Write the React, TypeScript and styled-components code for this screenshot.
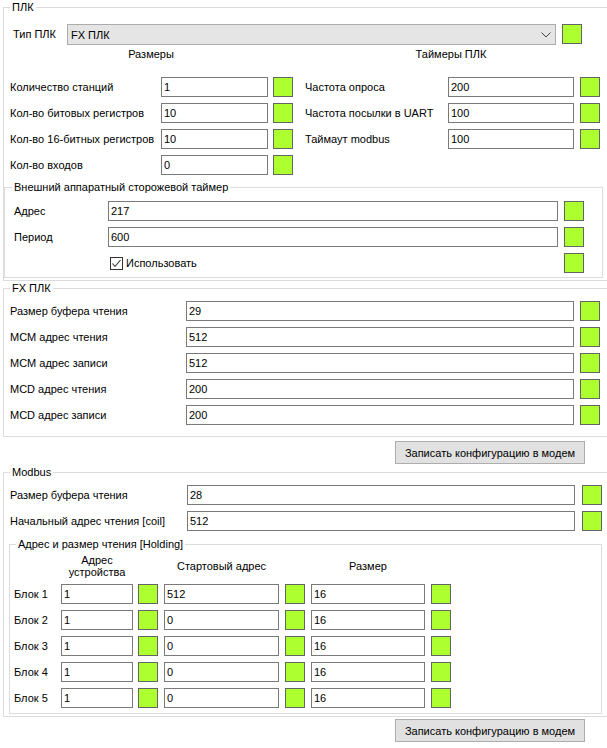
import React from "react";
import styled, { createGlobalStyle } from "styled-components";

const Global = createGlobalStyle`
  html, body { margin: 0; padding: 0; background: #fff; }
  body { font-family: "Liberation Sans", Arial, sans-serif; font-size: 11px; color: #000; }
  * { box-sizing: border-box; }
`;

const Page = styled.div`
  width: 607px;
  height: 748px;
  overflow: hidden;
  padding: 1px 0 0 3px;
  background: #fff;
`;

const Group = styled.fieldset<{ $width: number; $ml?: number; $mt?: number }>`
  margin: ${(p) => p.$mt ?? 0}px 0 0 ${(p) => p.$ml ?? 0}px;
  padding: 0;
  border: 1px solid #dcdcdc;
  width: ${(p) => p.$width}px;
  min-width: 0;
`;

const Legend = styled.legend<{ $ml?: number }>`
  margin-left: ${(p) => p.$ml ?? 6}px;
  padding: 0 2px;
  font-size: 11px;
  line-height: 13px;
  height: 13px;
  white-space: nowrap;
`;

const Body = styled.div<{ $pt: number; $pb: number; $pl: number }>`
  padding: ${(p) => p.$pt}px 0 ${(p) => p.$pb}px ${(p) => p.$pl}px;
`;

const Stack = styled.div<{ $mt?: number }>`
  display: flex;
  flex-direction: column;
  gap: 6px;
  margin-top: ${(p) => p.$mt ?? 0}px;
`;

const TypeRow = styled.div`
  display: flex;
  align-items: flex-start;
  padding-left: 9px;
  height: 21px;
`;

const TypeLabel = styled.span`
  width: 54px;
  line-height: 21px;
  white-space: nowrap;
`;

const Combo = styled.div`
  width: 489px;
  height: 21px;
  background: #e5e5e5;
  border: 1px solid #acacac;
  display: flex;
  align-items: center;
  justify-content: space-between;
  padding: 0 4px 0 3px;
`;

const Green = styled.span<{ $ml: number }>`
  display: block;
  flex: none;
  width: 20px;
  height: 20px;
  margin-left: ${(p) => p.$ml}px;
  background: #adff2f;
  border: 1px solid #646464;
`;

const HeadingsRow = styled.div`
  display: flex;
  margin-top: 3px;
  padding-left: 97px;
  line-height: 13px;
`;

const Heading = styled.span<{ $w: number; $ml?: number }>`
  display: block;
  width: ${(p) => p.$w}px;
  margin-left: ${(p) => p.$ml ?? 0}px;
  text-align: center;
  white-space: nowrap;
`;

const Columns = styled.div`
  display: flex;
  align-items: flex-start;
  margin-top: 16px;
`;

const Col = styled.div<{ $ml?: number }>`
  display: flex;
  flex-direction: column;
  gap: 6px;
  margin-left: ${(p) => p.$ml ?? 0}px;
`;

const FieldRow = styled.div`
  display: flex;
  align-items: center;
  height: 20px;
`;

const FieldLabel = styled.span<{ $w: number; $pl?: number }>`
  flex: none;
  width: ${(p) => p.$w}px;
  padding-left: ${(p) => p.$pl ?? 0}px;
  white-space: nowrap;
  line-height: 13px;
`;

const Input = styled.input<{ $w: number; $ml?: number }>`
  flex: none;
  width: ${(p) => p.$w}px;
  height: 20px;
  margin: 0 0 0 ${(p) => p.$ml ?? 0}px;
  padding: 0 2px;
  border: 1px solid #7a7a7a;
  background: #fff;
  color: #000;
  font-family: "Liberation Sans", Arial, sans-serif;
  font-size: 11px;
  outline: none;
`;

const CheckArea = styled.label`
  flex: none;
  width: 450px;
  display: flex;
  align-items: center;
  gap: 3px;
  padding-left: 2px;
`;

const CheckBox = styled.span`
  display: flex;
  align-items: center;
  justify-content: center;
  width: 13px;
  height: 13px;
  border: 1px solid #333;
  background: #fff;
`;

const ButtonRow = styled.div<{ $mt: number }>`
  display: flex;
  justify-content: flex-end;
  margin: ${(p) => p.$mt}px 22px 0 0;
`;

const Button = styled.button`
  width: 190px;
  height: 23px;
  padding: 0;
  background: #e1e1e1;
  border: 1px solid #adadad;
  font-family: "Liberation Sans", Arial, sans-serif;
  font-size: 11px;
  color: #000;
`;

const HoldHead = styled.div`
  display: flex;
  align-items: center;
  height: 24px;
  padding-left: 47px;
  margin-top: 3px;
`;

const HoldHeading = styled.span<{ $w: number; $ml?: number }>`
  display: block;
  width: ${(p) => p.$w}px;
  margin-left: ${(p) => p.$ml ?? 0}px;
  text-align: center;
  line-height: 12px;
`;

const Chevron = () => (
  <svg width="10" height="6" viewBox="0 0 10 6">
    <path d="M0.5 0.5 L5 5 L9.5 0.5" fill="none" stroke="#444" strokeWidth="1" />
  </svg>
);

const leftRows: [string, string][] = [
  ["Количество станций", "1"],
  ["Кол-во битовых регистров", "10"],
  ["Кол-во 16-битных регистров", "10"],
  ["Кол-во входов", "0"],
];

const rightRows: [string, string][] = [
  ["Частота опроса", "200"],
  ["Частота посылки в UART", "100"],
  ["Таймаут modbus", "100"],
];

const fxRows: [string, string][] = [
  ["Размер буфера чтения", "29"],
  ["MCM адрес чтения", "512"],
  ["MCM адрес записи", "512"],
  ["MCD адрес чтения", "200"],
  ["MCD адрес записи", "200"],
];

const blocks: [string, string, string][] = [
  ["1", "512", "16"],
  ["1", "0", "16"],
  ["1", "0", "16"],
  ["1", "0", "16"],
  ["1", "0", "16"],
];

export default function App() {
  return (
    <Page>
      <Global />
      <Group $width={610}>
        <Legend>ПЛК</Legend>
        <Body $pt={10} $pb={2} $pl={0}>
          <TypeRow>
            <TypeLabel>Тип ПЛК</TypeLabel>
            <Combo>
              <span>FX ПЛК</span>
              <Chevron />
            </Combo>
            <Green $ml={6} />
          </TypeRow>
          <HeadingsRow>
            <Heading $w={100}>Размеры</Heading>
            <Heading $w={120} $ml={190}>Таймеры ПЛК</Heading>
          </HeadingsRow>
          <Columns>
            <Col>
              {leftRows.map(([l, v]) => (
                <FieldRow key={l}>
                  <FieldLabel $w={157} $pl={6}>{l}</FieldLabel>
                  <Input $w={107} defaultValue={v} readOnly />
                  <Green $ml={5} />
                </FieldRow>
              ))}
            </Col>
            <Col $ml={12}>
              {rightRows.map(([l, v]) => (
                <FieldRow key={l}>
                  <FieldLabel $w={143}>{l}</FieldLabel>
                  <Input $w={126} defaultValue={v} readOnly />
                  <Green $ml={6} />
                </FieldRow>
              ))}
            </Col>
          </Columns>
          <Group $width={599} $mt={6}>
            <Legend $ml={7}>Внешний аппаратный сторожевой таймер</Legend>
            <Body $pt={7} $pb={4} $pl={9}>
              <Stack>
                <FieldRow>
                  <FieldLabel $w={94}>Адрес</FieldLabel>
                  <Input $w={450} defaultValue="217" readOnly />
                  <Green $ml={6} />
                </FieldRow>
                <FieldRow>
                  <FieldLabel $w={94}>Период</FieldLabel>
                  <Input $w={450} defaultValue="600" readOnly />
                  <Green $ml={6} />
                </FieldRow>
                <FieldRow>
                  <FieldLabel $w={94} />
                  <CheckArea>
                    <CheckBox>
                      <svg width="11" height="11" viewBox="0 0 11 11">
                        <path d="M1.5 5.5 L4 8.5 L9.5 2" fill="none" stroke="#333" strokeWidth="1.1" />
                      </svg>
                    </CheckBox>
                    <span>Использовать</span>
                  </CheckArea>
                  <Green $ml={6} />
                </FieldRow>
              </Stack>
            </Body>
          </Group>
        </Body>
      </Group>

      <Group $width={610} $mt={1}>
        <Legend>FX ПЛК</Legend>
        <Body $pt={6} $pb={11} $pl={6}>
          <Stack>
            {fxRows.map(([l, v]) => (
              <FieldRow key={l}>
                <FieldLabel $w={176}>{l}</FieldLabel>
                <Input $w={388} defaultValue={v} readOnly />
                <Green $ml={6} />
              </FieldRow>
            ))}
          </Stack>
        </Body>
      </Group>

      <ButtonRow $mt={4}>
        <Button>Записать конфигурацию в модем</Button>
      </ButtonRow>

      <Group $width={610} $mt={2}>
        <Legend>Modbus</Legend>
        <Body $pt={6} $pb={2} $pl={6}>
          <Stack>
            <FieldRow>
              <FieldLabel $w={177}>Размер буфера чтения</FieldLabel>
              <Input $w={388} defaultValue="28" readOnly />
              <Green $ml={7} />
            </FieldRow>
            <FieldRow>
              <FieldLabel $w={177}>Начальный адрес чтения [coil]</FieldLabel>
              <Input $w={388} defaultValue="512" readOnly />
              <Green $ml={7} />
            </FieldRow>
          </Stack>
          <Group $width={593} $mt={7} $ml={-1}>
            <Legend>Адрес и размер чтения [Holding]</Legend>
            <Body $pt={0} $pb={5} $pl={4}>
              <HoldHead>
                <HoldHeading $w={72}>
                  Адрес
                  <br />
                  устройства
                </HoldHeading>
                <HoldHeading $w={115} $ml={31}>Стартовый адрес</HoldHeading>
                <HoldHeading $w={114} $ml={32}>Размер</HoldHeading>
              </HoldHead>
              <Stack $mt={6}>
                {blocks.map(([a, b, c], i) => (
                  <FieldRow key={i}>
                    <FieldLabel $w={47}>Блок {i + 1}</FieldLabel>
                    <Input $w={72} defaultValue={a} readOnly />
                    <Green $ml={5} />
                    <Input $w={115} $ml={6} defaultValue={b} readOnly />
                    <Green $ml={6} />
                    <Input $w={114} $ml={6} defaultValue={c} readOnly />
                    <Green $ml={6} />
                  </FieldRow>
                ))}
              </Stack>
            </Body>
          </Group>
        </Body>
      </Group>

      <ButtonRow $mt={2}>
        <Button>Записать конфигурацию в модем</Button>
      </ButtonRow>
    </Page>
  );
}
